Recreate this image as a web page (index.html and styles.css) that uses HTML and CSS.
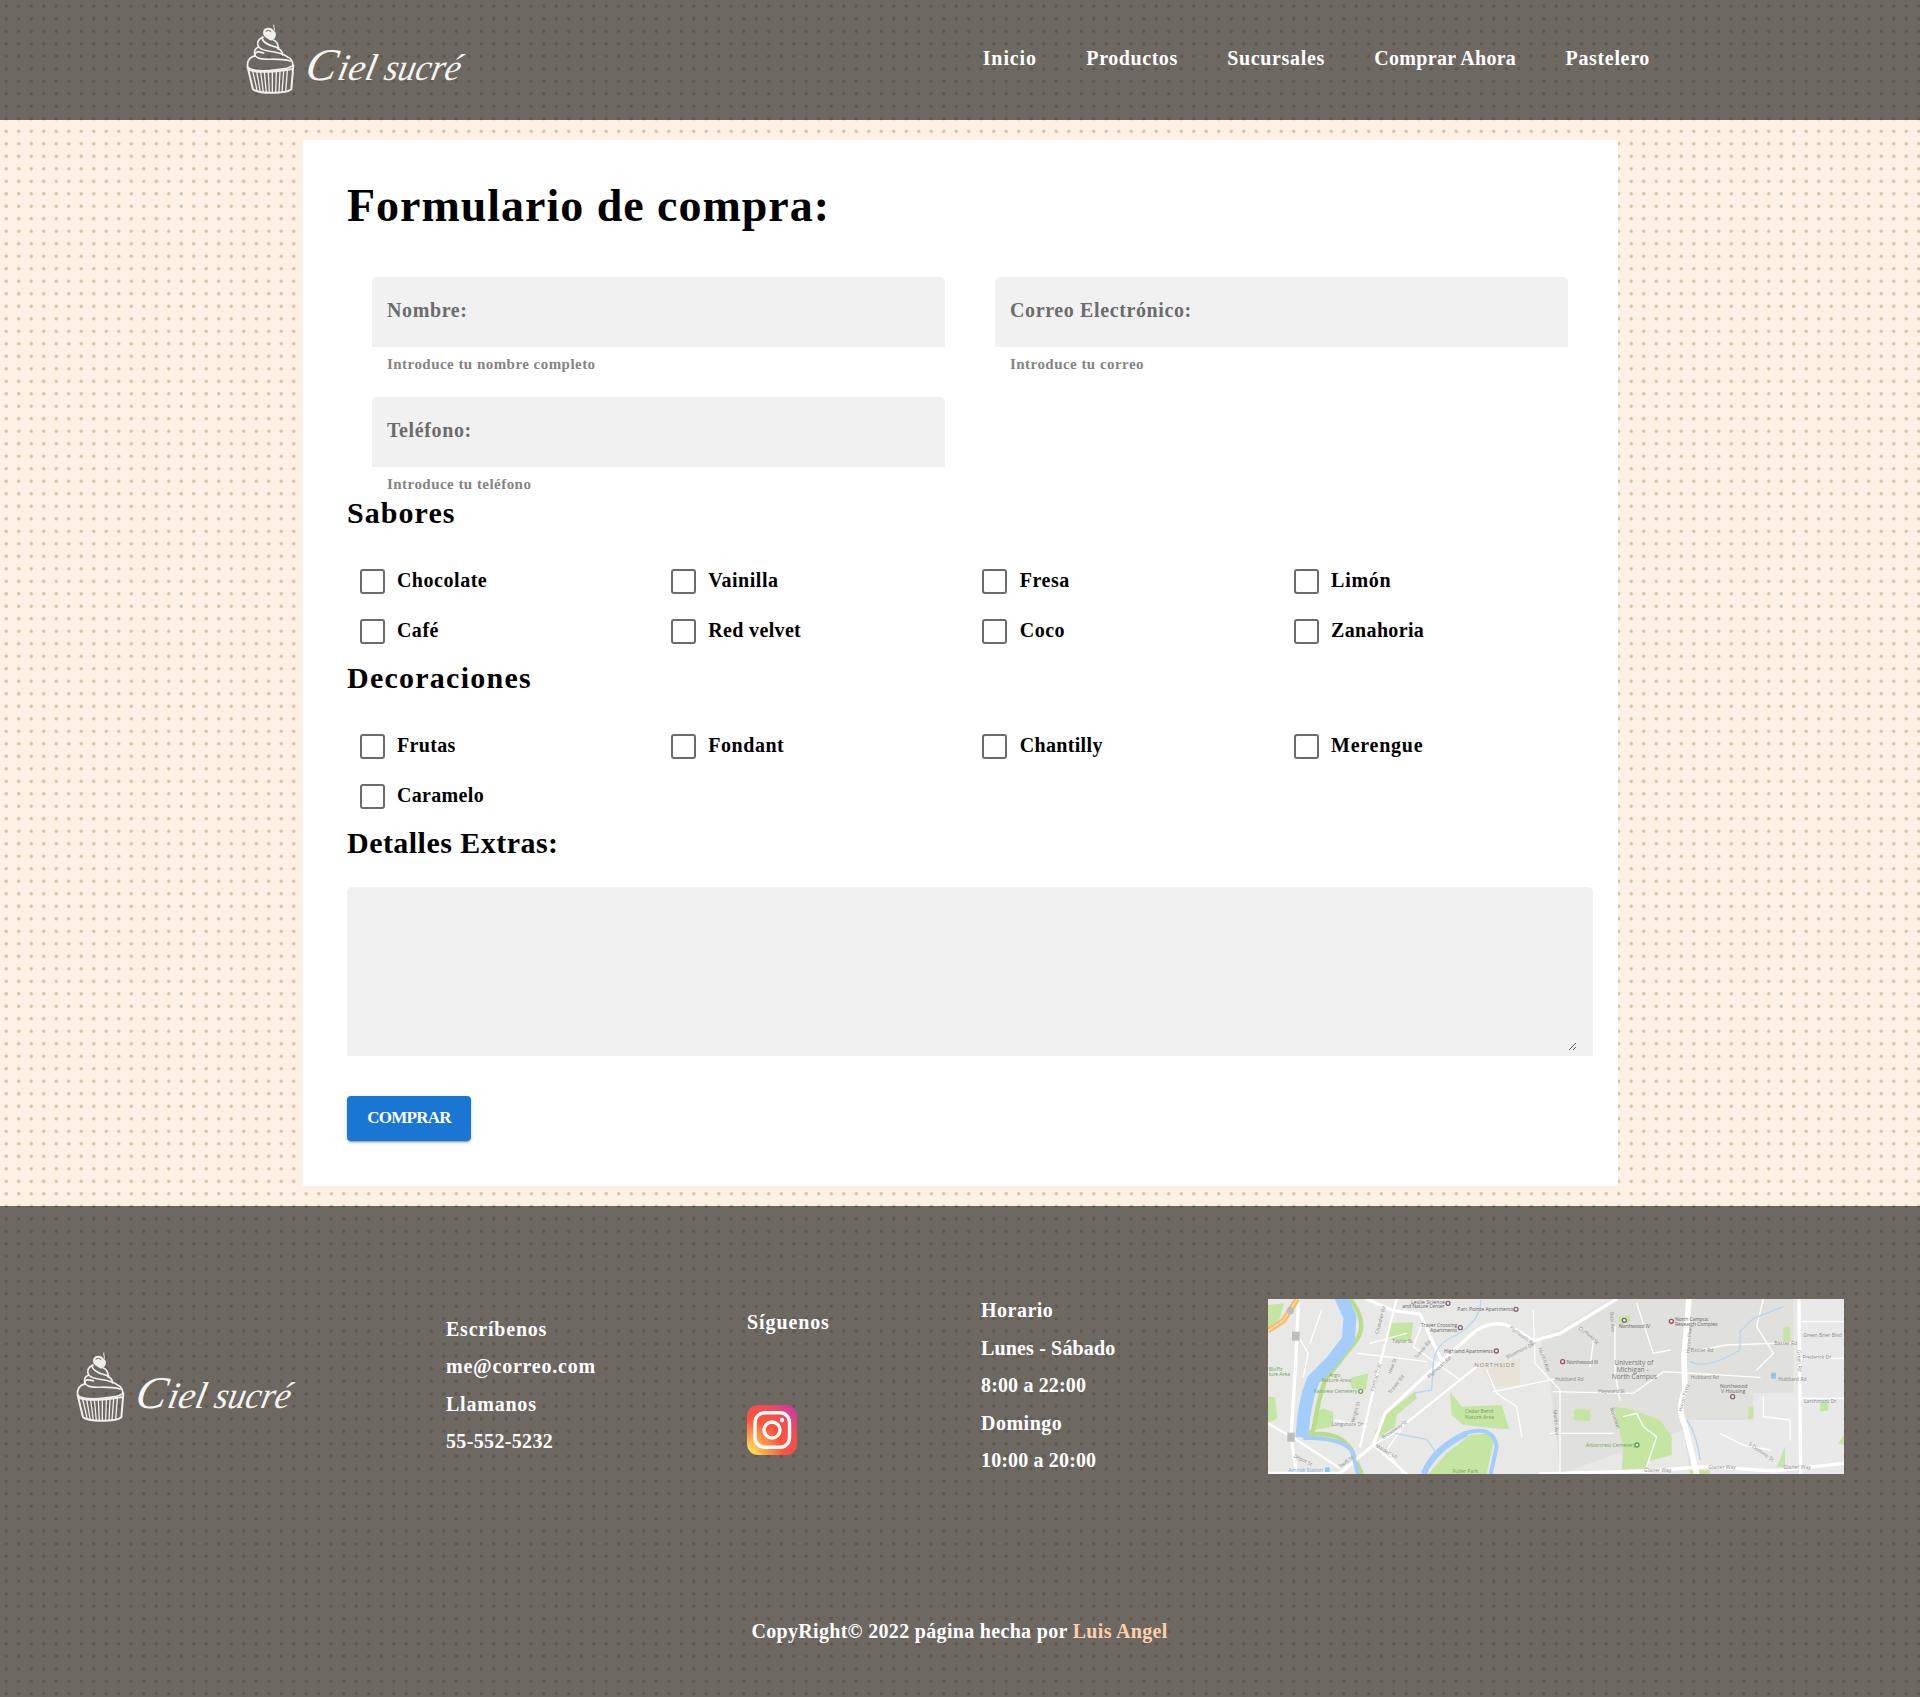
FILE: index.html
```html
<!DOCTYPE html>
<html lang="es">
<head>
<meta charset="utf-8">
<title>Ciel sucré</title>
<link rel="stylesheet" href="styles.css">
</head>
<body>
<svg class="defs" width="0" height="0" aria-hidden="true">
  <symbol id="logo" viewBox="45 40 666 216">
    <g fill="none" stroke="#efefec" stroke-width="5" stroke-linecap="round" stroke-linejoin="round">
      <path d="M53 172 C50 153 61 142 76 138 C70 126 75 116 86 112 C79 99 85 87 99 83"/>
      <path d="M53 173 C77 189 122 183 170 176 L188 169 C190 158 183 146 174 143 Q160 132 158 136 C157 126 151 119 143 117 C147 104 138 94 130 91"/>
      <path d="M76 139 C94 158 133 141 181 154 M86 112 C104 130 132 121 157 134 M97 82 C93 101 128 110 147 115 M74 140 C73 121 91 127 101 130"/>
      <path d="M53 173 L69 239 C83 252 166 254 184 239 L190 167 M58 181 C91 192 145 185 187 178" stroke-width="6"/>
      <path d="M68 184 L82 245 M80 186 L91 247 M92 187 L100 248 M103 187 L109 249 M115 187 L118 249 M127 187 L127 249 M139 186 L137 249 M150 185 L147 248 M161 184 L156 247 M172 182 L167 246" stroke-width="4"/>
      <path d="M132 64 C136 55 129 50 131 46" stroke-width="3"/>
    </g>
    <path fill="#efefec" d="M101 62 C107 50 128 54 130 63 C142 67 139 86 128 90 C122 98 116 87 108 84 C98 79 98 67 101 62Z"/>
    <path d="M107 65 Q115 58 124 66" fill="none" stroke="#6e6861" stroke-width="3"/>
    <g class="logo-text" transform="translate(0 212) skewX(-12)">
      <text x="221" class="logo-cap" textLength="92" lengthAdjust="spacingAndGlyphs">C</text>
      <text x="318" textLength="114" lengthAdjust="spacingAndGlyphs">iel</text>
      <text x="458" textLength="228" lengthAdjust="spacingAndGlyphs">sucré</text>
    </g>
  </symbol>
</svg>

<header class="header">
  <svg class="logo" role="img" aria-label="Ciel sucré"><use href="#logo"/></svg>
  <nav class="nav">
    <a href="#">Inicio</a>
    <a href="#">Productos</a>
    <a href="#">Sucursales</a>
    <a href="#">Comprar Ahora</a>
    <a href="#">Pastelero</a>
  </nav>
</header>

<main class="card">
  <h1>Formulario de compra:</h1>
  <form>
    <div class="fields">
      <div class="field"><input type="text" placeholder="Nombre:"><p>Introduce tu nombre completo</p></div>
      <div class="field"><input type="email" placeholder="Correo Electrónico:"><p>Introduce tu correo</p></div>
      <div class="field"><input type="tel" placeholder="Teléfono:"><p>Introduce tu teléfono</p></div>
    </div>
    <h2 class="flavors-title">Sabores</h2>
    <div class="options">
      <label><input type="checkbox"><span>Chocolate</span></label>
      <label><input type="checkbox"><span>Vainilla</span></label>
      <label><input type="checkbox"><span>Fresa</span></label>
      <label><input type="checkbox"><span class="loose">Limón</span></label>
      <label><input type="checkbox"><span>Café</span></label>
      <label><input type="checkbox"><span class="tight">Red velvet</span></label>
      <label><input type="checkbox"><span>Coco</span></label>
      <label><input type="checkbox"><span class="tight">Zanahoria</span></label>
    </div>
    <h2 class="decorations-title">Decoraciones</h2>
    <div class="options">
      <label><input type="checkbox"><span class="tight">Frutas</span></label>
      <label><input type="checkbox"><span>Fondant</span></label>
      <label><input type="checkbox"><span class="tight">Chantilly</span></label>
      <label><input type="checkbox"><span class="loose">Merengue</span></label>
      <label><input type="checkbox"><span class="tight">Caramelo</span></label>
    </div>
    <h2>Detalles Extras:</h2>
    <div class="details"><textarea aria-label="Detalles Extras"></textarea></div>
    <button type="button" class="buy">COMPRAR</button>
  </form>
</main>

<footer class="footer">
  <div class="footer-grid">
    <svg class="logo" role="img" aria-label="Ciel sucré"><use href="#logo"/></svg>
    <div class="contact"><p>Escríbenos</p><p>me@correo.com</p><p>Llamanos</p><p class="phone">55-552-5232</p></div>
    <div class="social">
      <p>Síguenos</p>
      <svg viewBox="0 0 50 50" width="50" height="50" role="img" aria-label="Instagram">
        <defs><radialGradient id="ig" cx="0" cy="1" r="1.42"><stop offset="0" stop-color="#ffdd55"/><stop offset=".12" stop-color="#ffd254"/><stop offset=".5" stop-color="#ff543e"/><stop offset=".72" stop-color="#f44d50"/><stop offset=".94" stop-color="#c837ab"/></radialGradient></defs>
        <rect width="50" height="50" rx="11" fill="url(#ig)"/>
        <rect x="8" y="7.8" width="34.5" height="34.5" rx="9.5" fill="none" stroke="#fff" stroke-width="3.4"/>
        <circle cx="25" cy="25" r="8" fill="none" stroke="#fff" stroke-width="3.4"/><circle cx="35" cy="15" r="2.2" fill="#fff"/>
      </svg>
    </div>
    <div class="hours"><p class="wide">Horario</p><p>Lunes - Sábado</p><p>8:00 a 22:00</p><p class="wide">Domingo</p><p>10:00 a 20:00</p></div>
    <svg class="map" viewBox="24 27 1728 525" preserveAspectRatio="none" role="img" aria-label="Mapa">
      <rect x="24" y="27" width="1728" height="525" fill="#e8e8e7"/>
      <path d="M840 140 L900 120 L1050 27 H1600 V552 H1290 L1270 420 L900 552 L885 400 L870 280Z" fill="#e0e0dd"/>
      <path d="M1620 27 H1752 V552 H1300 L1285 390 H1480 V310 H1620Z" fill="#e9e9e9"/>
      <path d="M665 240 L780 205 L780 290 L700 290Z" fill="#e7e3d9"/>
      <g fill="#c5e5a3">
        <path d="M24 45 L72 40 L60 85 L24 118Z M393 100 L460 97 L452 155 L383 148Z M24 320 L45 322 L52 385 L24 400Z"/>
        <path d="M270 265 L325 250 L318 298 L275 296Z M188 355 L220 365 L218 410 L162 420 L168 370Z"/>
        <path d="M345 425 L380 370 L465 305 L470 325 L410 375 L405 410 L350 445Z"/>
        <path d="M570 305 L605 350 L725 345 L748 418 L700 415 L610 405 L575 375Z"/>
        <path d="M505 552 L560 490 L630 435 L690 430 L700 460 L680 552Z"/>
        <path d="M943 357 L992 360 L990 393 L942 390Z M1062 350 L1110 357 L1200 390 L1235 440 V495 L1160 515 L1165 535 L1085 540 L1090 470Z"/>
        <path d="M1570 110 H1590 V155 H1570Z M1680 340 L1705 335 V360 L1680 365Z M1550 530 L1575 470 V530Z M1735 460 L1752 435 V465Z M1465 350 H1480 V387 H1465Z M1290 541 H1350 V552 H1290Z M1075 80 L1110 75 V95 L1080 105Z"/>
      </g>
      <path fill="none" stroke="#b8dd8b" stroke-width="13" d="M270 27 Q325 95 290 150 L195 270 Q175 330 160 420 L145 435 Q235 420 275 480 L305 552"/>
      <g fill="none" stroke="#fff" stroke-linecap="round">
        <path stroke-width="10" d="M115 40 L107 220 L93 440 L110 552 M320 27 L400 62 L480 72 L520 160 L550 220 M240 550 L340 465 L375 370 L515 240 L650 120 Q710 85 760 115 L822 152 L900 130 L1040 45 L1070 27"/>
        <path stroke-width="17" d="M1287 27 L1272 200 L1275 300 Q1250 360 1275 405 L1310 552"/>
        <path stroke-width="10" d="M1617 27 L1622 552 M24 550 H240 M840 552 L1160 543 L1340 530 L1540 543 L1752 520"/>
        <path stroke-width="7" d="M410 27 L340 300 L300 470 M24 400 L110 450 L240 535 M340 465 L440 552 M340 465 L400 430 L650 230"/>
        <path stroke-width="4" d="M295 190 L500 215 M330 160 L440 130 M225 390 L320 410 M680 240 L710 310 L770 350 L785 440 M700 305 L880 268 M820 60 L825 220 L900 300 V552 M110 130 L145 190 L130 260 M185 60 L150 160 M430 410 L380 480 L430 552 M600 270 L460 170 L490 90 M880 305 L1120 310 L1210 245 L1500 262 M1065 110 V250 L1080 330 M1130 40 L1180 190 L1230 180 M1090 380 L1130 370 L1150 410 L1190 440 L1160 530 M1295 185 L1400 165 L1620 157 M1510 27 L1490 110 L1540 190 L1490 240 M1620 95 H1752 M1620 205 H1752 M1625 325 H1752 M1510 320 V380 L1590 390 V450 M1380 430 L1450 465 L1530 480 M870 430 H1060 M960 115 L1000 155 L990 230"/>
      </g>
      <g fill="none" stroke="#a4cdfc">
        <path stroke-width="39" stroke-linejoin="round" d="M242 20 L270 80 L265 150 L215 215 L160 270 L145 310 L132 375 L126 442"/>
        <path stroke-width="12" d="M130 444 Q235 440 275 480 L295 555 M490 552 Q520 470 620 428 Q700 405 710 470 L692 552"/>
        <path stroke-width="18" d="M492 550 Q520 480 620 430"/>
        <path stroke="#b7d6ef" stroke-width="4" d="M662 30 Q665 90 590 135 Q525 160 520 220 L515 300 L460 310 M405 430 L500 448 L530 490 M1290 215 Q1340 240 1440 180 V125 L1480 85 L1570 50 M1280 390 Q1310 430 1320 510"/>
      </g>
      <path d="M24 122 L70 92 L112 27" fill="none" stroke="#f7ba76" stroke-width="17"/><path d="M24 122 L70 92 L112 27" fill="none" stroke="#ffe09c" stroke-width="4"/>
      <g fill="#bdbdbd"><circle cx="91" cy="62" r="11"/><rect x="96" y="125" width="23" height="27"/><rect x="82" y="428" width="22" height="27"/></g>
      <path d="M195 532h14v14h-14z M1533 248h15v18h-15z" fill="#8cc8ee"/>
      <g fill="#eee" stroke="#816568" stroke-width="4"><circle cx="564" cy="40" r="6"/><circle cx="768" cy="58" r="6"/><circle cx="601" cy="113" r="6"/><circle cx="709" cy="183" r="6"/><circle cx="1093" cy="91" r="6"/><circle cx="1234" cy="94" r="6" stroke="#a14b5b"/><circle cx="908" cy="215" r="6" stroke="#a14b5b"/><circle cx="1418" cy="320" r="6"/><circle cx="302" cy="304" r="6" stroke="#71a35d"/><circle cx="1131" cy="465" r="6" stroke="#559e55"/></g>
      <g class="map-text">
        <text x="453" y="43" textLength="102">Leslie Science</text><text x="427" y="55" textLength="127">and Nature Center</text><text x="592" y="64" textLength="168">Parc Pointe Apartments</text><text x="482" y="111" textLength="110">Traver Crossing</text><text x="510" y="126" textLength="82">Apartments</text><text x="552" y="189" textLength="147">Highland Apartments</text>
        <text x="1076" y="114" textLength="94">Northwood IV</text><text x="1245" y="93" textLength="100">North Campus</text><text x="1245" y="108" textLength="128">Research Complex</text><text x="920" y="222" textLength="94">Northwood III</text><text x="1380" y="293">Northwood</text><text x="1383" y="309">V Housing</text>
      </g>
      <text x="643" y="230" class="map-area map-north" textLength="120">NORTHSIDE</text>
      <g class="map-area"><text x="1063" y="225">University of</text><text x="1070" y="246">Michigan -</text><text x="1055" y="268">North Campus</text></g>
      <g class="map-park"><text x="207" y="262">Argo</text><text x="185" y="277">Nature Area</text><text x="162" y="310" textLength="130">Fairview Cemetery</text><text x="615" y="370">Cedar Bend</text><text x="615" y="386">Nature Area</text><text x="977" y="471">Arborcrest Cemetery</text><text x="578" y="550">Fuller Park</text><text x="26" y="242">Bluffs</text><text x="26" y="257" textLength="64">ture Area</text></g>
      <text class="map-transit" x="85" y="545" textLength="104">Amtrak Station</text>
      <g class="map-street"><text x="397" y="160">Taylor St</text><text x="886" y="273">Hubbard Rd</text><text x="1015" y="309">Hayward St</text><text x="1292" y="187">Baxter Rd</text><text x="1292" y="268">Hubbard Rd</text><text x="1543" y="166">Baxter Rd</text><text x="1555" y="273">Hubbard Rd</text><text x="1630" y="140">Green Brier Blvd</text><text x="1628" y="206">Frederick Dr</text><text x="1632" y="340">Larchmont Dr</text><text x="1152" y="547">Glazier Way</text><text x="1345" y="536">Glazier Way</text><text x="1570" y="538">Glazier Way</text><text x="215" y="408">Longshore Dr</text>
        <text transform="translate(355 133) rotate(-75)">Chandler Rd</text><text transform="translate(342 305) rotate(-75)">Pontiac Trail</text><text transform="translate(283 398) rotate(-75)">Wright St</text><text transform="translate(393 253) rotate(-70)">Hew St</text><text transform="translate(392 313) rotate(-52)">Traver Rd</text><text transform="translate(470 207) rotate(-50)">Traver Rd</text><text transform="translate(508 265) rotate(-42)">Plymouth Rd</text><text transform="translate(748 115) rotate(36)">Plymouth Rd</text><text transform="translate(742 206) rotate(-26)">Bluemont Dr</text><text transform="translate(835 175) rotate(70)">Murfin Ave</text><text transform="translate(880 360) rotate(86)">Murfin Ave</text><text transform="translate(370 448) rotate(-34)">Broadway St</text><text transform="translate(345 470) rotate(30)">Maiden Ln</text><text transform="translate(240 535) rotate(-35)">Swift St</text><text transform="translate(1265 365) rotate(-75)">Huron Pkwy</text><text transform="translate(1288 190) rotate(-84)">Huron Pkwy</text><text transform="translate(1612 180) rotate(88)">Green Rd</text><text transform="translate(1465 465) rotate(35)">S Dominic St</text><text transform="translate(1050 67) rotate(86)">Beal Ave</text><text transform="translate(1050 355) rotate(72)">Bonisteel</text><text transform="translate(955 117) rotate(40)">Duffield St</text><text transform="translate(100 500) rotate(28)">Depot St</text></g>
    </svg>
  </div>
  <p class="copyright">CopyRight© 2022 página hecha por <a href="#">Luis Angel</a></p>
</footer>
</body>
</html>
```
FILE: styles.css
```css
* { box-sizing: border-box; }
body {
  margin: 0;
  color: #000;
  font: bold 20px/37.5px "Source Serif Pro", "Liberation Serif", serif;
  background: #fff0e5 radial-gradient(circle at center, #cfc2a2 1.1px, rgba(207, 194, 162, 0) 2.2px) 0 0 / 12.5px 12.5px;
}
h1, h2, p { margin: 0; }
a { color: inherit; text-decoration: none; }
.defs { display: block; position: absolute; }

.header, .footer { background: rgba(28, 27, 23, .64); color: #fff; }
.header { height: 120px; padding: 23px 270px 0 245px; display: flex; justify-content: space-between; align-items: flex-start; }
.logo { width: 222px; height: 72px; display: block; }
.logo-text { fill: #f4f4f1; font: italic normal 112px "Liberation Serif", serif; }
.logo-cap { font-size: 136px; }
.nav { display: flex; gap: 49.4px; padding-top: 17px; letter-spacing: .66px; }
.nav a:nth-child(1) { letter-spacing: .9px; }
.nav a:nth-child(2) { letter-spacing: .57px; }
.nav a:nth-child(4) { letter-spacing: .3px; }

.card { width: 1315px; height: 1046px; margin: 20px auto; padding: 0 0 0 44.5px; background: #fff; }
h1 { font-size: 46px; line-height: 60px; padding-top: 36px; letter-spacing: .98px; }
.fields { display: grid; grid-template-columns: 573px 573px; column-gap: 50px; padding: 41px 25px 0; margin-bottom: -25px; }
.field { height: 120px; }
.field input { display: block; width: 100%; height: 70px; border: 0; border-radius: 5px 5px 0 0; background: #f1f1f1; padding: 0 15px 4px; font: inherit; letter-spacing: .62px; }
.field input::placeholder { color: #6c6c6c; opacity: 1; }
.field p { font-size: 15px; line-height: 18px; padding: 8px 15px 0; color: #848484; letter-spacing: .46px; }
h2 { font-size: 30px; line-height: 40px; margin: 1px 0 24px; letter-spacing: .46px; }
.flavors-title { letter-spacing: 1.05px; }
.decorations-title { letter-spacing: 1.25px; }
.options { display: grid; grid-template-columns: repeat(4, 311.4px); letter-spacing: .54px; }
.options label { display: flex; align-items: center; gap: 12.3px; height: 50px; padding: 0 0 1px 12.6px; }
.options span { padding-bottom: 2px; }
.options input { appearance: none; width: 25px; height: 25px; margin: 0; border: 2px solid #6b6b6b; border-radius: 3px; }
.options .tight { letter-spacing: .34px; }
.options .loose { letter-spacing: .75px; }
.details { width: 1246px; height: 169px; background: #f1f1f1; border-radius: 5px 5px 0 0; padding: 31px 16px 5px 15px; }
.details textarea { display: block; width: 100%; height: 133px; border: 0; background: transparent; resize: vertical; font: inherit; outline: 0; }
.buy { display: block; width: 124px; height: 45px; margin-top: 40px; padding: 0 0 2px; border: 0; border-radius: 4px; color: #fff; background: #1976d2; font: bold 17px/30px "Source Serif Pro", "Liberation Serif", serif; letter-spacing: -.75px; box-shadow: 0 3px 1px -2px rgba(0,0,0,.2), 0 2px 2px rgba(0,0,0,.14), 0 1px 5px rgba(0,0,0,.12); }

.footer { height: 491px; padding: 93px 76px 0 75px; }
.footer-grid { display: grid; grid-template-columns: 371px 301px 234px 287px 576px; }
.footer-grid > .logo { margin-top: 52px; }
.contact { padding-top: 11.6px; letter-spacing: .78px; }
.contact .phone { letter-spacing: .35px; }
.social { padding-top: 5px; letter-spacing: .9px; }
.social svg { display: block; margin-top: 63px; }
.hours { margin-top: -7px; letter-spacing: .15px; }
.hours .wide { letter-spacing: .5px; }
.map { width: 576px; height: 175px; display: block; }
.map-text, .map-area, .map-park, .map-street, .map-transit { font: 15.5px "Open Sans", sans-serif; fill: #666; }
.map-street { font-size: 15px; fill: #8a8a8a; }
.map-park { fill: #74a263; }
.map-area { font-size: 20px; fill: #777; }
.map-north { font-size: 18px; fill: #9a8878; }
.map-transit { fill: #6fb2dc; }
.copyright { text-align: center; padding-top: 133px; letter-spacing: .32px; }
.copyright a { color: #fcd0ac; }
```
